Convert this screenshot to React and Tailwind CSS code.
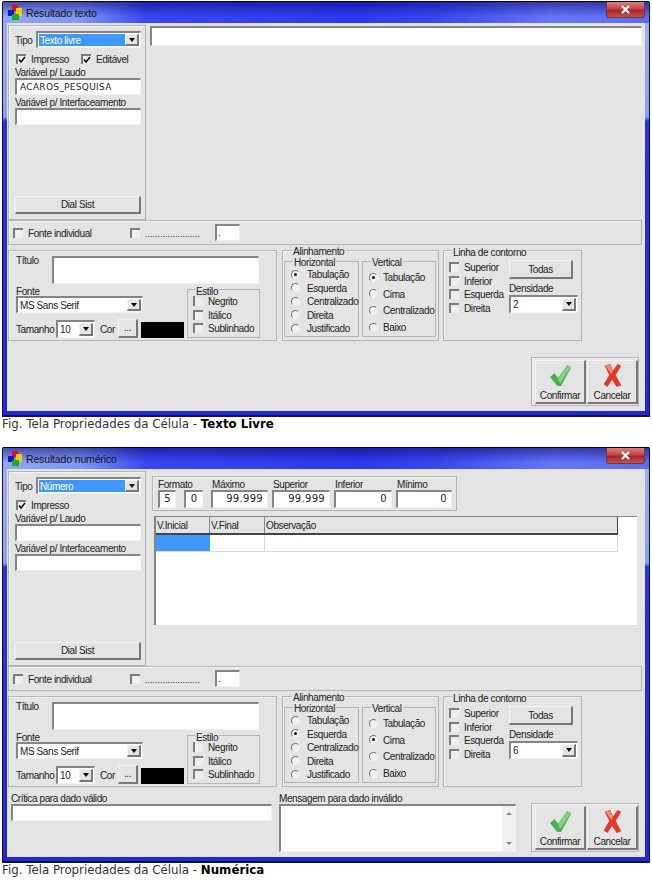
const ui = "font-['Liberation_Sans',Arial,sans-serif] text-[10px] leading-[12px] tracking-[-0.4px] whitespace-nowrap text-[#222]";
const sunken = "border-t-2 border-l-2 border-r border-b border-t-[#858585] border-l-[#858585] border-r-[#f1f1f1] border-b-[#f1f1f1] bg-white";
const raised = "border-r-2 border-b-2 border-t border-l border-t-[#f4f4f4] border-l-[#f4f4f4] border-r-[#777] border-b-[#777] bg-[#e4e4e4]";
const groupBox = "border border-[#b4b4b4] shadow-[inset_1px_1px_0_#f3f3f3]";
const mono = "font-['DejaVu_Sans',sans-serif] text-[10px] tracking-[0.3px] leading-[14px]";

function Check({ on, label, className = "", gap = "gap-[5px]" }) {
  return (
    <div className={`flex items-center ${gap} ${className}`}>
      <span className="w-[10px] h-[10px] border-t-2 border-l-2 border-[#7d7d7d] bg-[#efefef] flex items-center justify-center shrink-0">
        {on && (
          <svg width="8" height="8" viewBox="0 0 8 8">
            <path d="M1 3.5 L3 6 L7 1" fill="none" stroke="#111" strokeWidth="1.6" />
          </svg>
        )}
      </span>
      {label && <span className="translate-y-px">{label}</span>}
    </div>
  );
}

function Radio({ on, label, gap = "gap-[7px]", className = "" }) {
  return (
    <div className={`flex items-center ${gap} ${className}`}>
      <span className="w-[9px] h-[9px] rounded-full border border-[#efefef] border-t-[#777] border-l-[#777] bg-[#f1f1f1] flex items-center justify-center shrink-0">
        {on && <span className="w-[3px] h-[3px] rounded-full bg-[#111]" />}
      </span>
      <span className="translate-y-px">{label}</span>
    </div>
  );
}

function Arrow() {
  return (
    <span className={`w-[14px] self-stretch flex items-center justify-center shrink-0 ${raised}`}>
      <span className="border-x-[3px] border-x-transparent border-t-[4px] border-t-[#111]" />
    </span>
  );
}

function Combo({ value, className = "", text = "" }) {
  return (
    <div className={`flex p-px ${sunken} ${className}`}>
      <span className={`flex-1 pl-[1px] leading-[13px] ${text}`}>{value}</span>
      <Arrow />
    </div>
  );
}

function AppIcon() {
  return (
    <svg width="14" height="15" viewBox="0 0 14 15" className="shrink-0">
      <rect x="4" y="0" width="6" height="6" fill="#e01010" />
      <rect x="0" y="5" width="6" height="6" fill="#1414c8" />
      <rect x="8" y="3" width="6" height="8" fill="#f4d000" />
      <rect x="4" y="9" width="7" height="6" fill="#18b018" />
    </svg>
  );
}

function TitleBar({ title }) {
  return (
    <div className="h-[22px] flex items-center justify-between bg-[linear-gradient(180deg,rgba(8,8,110,0.55)_0%,rgba(8,8,110,0)_70%),linear-gradient(90deg,#8fa8f4_0%,#7f96f6_12%,#3a46f4_22%,#2c38f0_55%,#3a48f2_68%,#6676f6_85%,#5a6cf0_100%)] border-t border-t-black pl-[5px] pr-[4px]">
      <div className="flex items-center gap-[4px]">
        <AppIcon />
        <span className="text-[#111] text-[10.5px] tracking-[-0.15px]">{title}</span>
      </div>
      <div className="self-start w-[39px] h-[16px] rounded-b-[3px] bg-[linear-gradient(180deg,#d98080_0%,#c04848_45%,#a82424_55%,#c85050_100%)] border border-t-0 border-[#6b3a3a] flex items-center justify-center">
        <svg width="9" height="9" viewBox="0 0 9 9">
          <path d="M1 1 L8 8 M8 1 L1 8" stroke="#fff" strokeWidth="2.2" />
        </svg>
      </div>
    </div>
  );
}

function LeftPanel({ editable, value, tipo }) {
  return (
    <div className={`w-[138px] h-[195px] shrink-0 ${groupBox} pl-[6px] pr-[4px] pt-[5px] flex flex-col`}>
      <div className="flex items-center h-[17px]">
        <span className="w-[21px] shrink-0 translate-y-px">Tipo</span>
        <Combo value={tipo} className="flex-1 h-[17px]" text="bg-[#3f97fb] text-white" />
      </div>
      <div className="flex mt-[5px] ml-px h-[12px]">
        <Check on label="Impresso" className="w-[65px]" />
        {editable && <Check on label="Editável" />}
      </div>
      <span className="mt-[1px] h-[12px] translate-y-px">Variável p/ Laudo</span>
      <div className={`h-[17px] ${sunken} pl-[3px] ${mono} !text-[9px]`}>{value}</div>
      <span className="mt-[1px] h-[12px] translate-y-px">Variável p/ Interfaceamento</span>
      <div className={`h-[17px] ${sunken}`} />
      <button className={`mt-auto mb-[5px] h-[18px] pt-px ${raised}`}>Dial Sist</button>
    </div>
  );
}

function FontRow() {
  return (
    <div className={`h-[25px] mr-[3px] ${groupBox} flex items-center pl-[4px]`}>
      <Check label="Fonte individual" className="w-[117px]" />
      <Check label="......................" className="w-[85px] text-[9px] tracking-normal" />
      <div className={`w-[25px] h-[17px] ${sunken} pl-[1px] leading-[14px]`}>.</div>
    </div>
  );
}

function TitlePanel() {
  return (
    <div className={`w-[269px] h-[91px] ${groupBox} pl-[7px] pt-[3px] shrink-0`}>
      <div className="flex">
        <span className="w-[36px] translate-y-px">Título</span>
        <div className={`w-[207px] h-[28px] mt-[2px] ${sunken}`} />
      </div>
      <div className="flex">
        <div className="w-[171px] shrink-0 flex flex-col">
          <span className="h-[11px] mt-px translate-y-px">Fonte</span>
          <Combo value="MS Sans Serif" className="w-[127px] h-[17px]" />
          <div className="flex items-center mt-[6px] h-[19px]">
            <span className="w-[40px] shrink-0 translate-y-px">Tamanho</span>
            <Combo value="10" className="w-[39px] h-[18px]" />
            <span className="ml-[5px] w-[18px] shrink-0 translate-y-px">Cor</span>
            <button className={`w-[20px] h-[19px] ${raised} leading-[10px]`}>...</button>
            <div className="ml-[3px] w-[43px] h-[16px] mt-[2px] bg-black shrink-0" />
          </div>
        </div>
        <div className="mt-[5px] relative w-[73px] h-[49px] border border-[#b4b4b4] pl-[5px] pt-[5px]">
          <span className="absolute -top-[4px] left-[7px] bg-[#e4e4e4] px-px">Estilo</span>
          <div className="flex flex-col gap-[1.5px]">
            <Check label="Negrito" className="h-[12px]" />
            <Check label="Itálico" className="h-[12px]" />
            <Check label="Sublinhado" className="h-[12px]" />
          </div>
        </div>
      </div>
    </div>
  );
}

function AlignPanel({ horizontal, vertical }) {
  const hs = ["Tabulação", "Esquerda", "Centralizado", "Direita", "Justificado"];
  const vs = ["Tabulação", "Cima", "Centralizado", "Baixo"];
  return (
    <div className={`relative w-[157px] h-[91px] ml-[5px] ${groupBox} shrink-0 flex gap-[3px] pl-px pt-[10px]`}>
      <span className="absolute -top-[5px] left-[9px] bg-[#e4e4e4] px-px">Alinhamento</span>
      <div className="relative w-[75px] h-[76px] border border-[#b4b4b4] pl-[6px] pt-[6px] flex flex-col gap-[1.5px]">
        <span className="absolute -top-[5px] left-[8px] bg-[#e4e4e4] px-px">Horizontal</span>
        {hs.map((h) => <Radio key={h} label={h} on={h === horizontal} className="h-[12px]" />)}
      </div>
      <div className="relative w-[74px] h-[76px] border border-[#b4b4b4] pl-[6px] pt-[9px] flex flex-col gap-[4.7px]">
        <span className="absolute -top-[5px] left-[8px] bg-[#e4e4e4] px-px">Vertical</span>
        {vs.map((v) => <Radio key={v} label={v} on={v === vertical} gap="gap-[5px]" className="h-[12px]" />)}
      </div>
    </div>
  );
}

function LinePanel({ density }) {
  return (
    <div className={`relative w-[139px] h-[91px] ml-[4px] ${groupBox} shrink-0 flex pl-[5px] pt-[9px]`}>
      <span className="absolute -top-[4px] left-[8px] bg-[#e4e4e4] px-px">Linha de contorno</span>
      <div className="flex flex-col gap-[1.5px] w-[60px] pt-px">
        {["Superior", "Inferior", "Esquerda", "Direita"].map((l) => <Check key={l} label={l} className="h-[12px]" />)}
      </div>
      <div className="flex flex-col">
        <button className={`w-[64px] h-[19px] pt-[2px] ${raised}`}>Todas</button>
        <span className="mt-[3px] h-[12px] translate-y-px">Densidade</span>
        <Combo value={density} className="w-[69px] h-[18px] mt-px" />
      </div>
    </div>
  );
}

function ActionButtons() {
  return (
    <div className={`w-[108px] h-[49px] ${groupBox} flex gap-[1px] pl-[3px] pt-[2px]`}>
      <button className={`w-[51px] h-[44px] ${raised} flex flex-col items-center`}>
        <svg width="25" height="24" viewBox="0 0 25 24" className="mt-[4px]">
          <path d="M1 13 L6 9 L10 14 L20 0 L24 3 L13 23 L9 23 Z" fill="#4fae52" />
          <path d="M10 15 L20 1 L23 3 L12 20 Z" fill="#86d486" />
        </svg>
        <span className="mt-[3px]">Confirmar</span>
      </button>
      <button className={`w-[51px] h-[44px] ${raised} flex flex-col items-center`}>
        <svg width="21" height="25" viewBox="0 0 21 25" className="mt-[3px]">
          <path d="M2 2 L8 0 L11 7 L16 0 L20 2 L14 12 L20 23 L15 25 L10 17 L5 25 L1 22 L7 12 Z" fill="#e23a2a" />
          <path d="M3 2 L8 1 L11 8 L9 11 Z" fill="#f58a78" />
        </svg>
        <span className="mt-[3px]">Cancelar</span>
      </button>
    </div>
  );
}

function Field({ label, value, className = "" }) {
  return (
    <div className={`flex flex-col ${className}`}>
      <span className="h-[12px] ml-px translate-y-px">{label}</span>
      <div className={`h-[18px] ${sunken} ${mono} text-right pr-[4px]`}>{value}</div>
    </div>
  );
}

function NumericRight() {
  return (
    <div className="flex-1 h-[195px] min-w-0 flex flex-col pl-[2px]">
      <div className={`w-[305px] h-[35px] mt-[5px] ${groupBox} flex items-end gap-[4px] pl-[5px] pb-[2px] shrink-0`}>
        <div className="flex flex-col w-[45px]">
          <span className="h-[12px] translate-y-px">Formato</span>
          <div className="flex gap-[8px]">
            <div className={`w-[18px] h-[18px] ${sunken} ${mono} text-center`}>5</div>
            <div className={`w-[19px] h-[18px] ${sunken} ${mono} text-center`}>0</div>
          </div>
        </div>
        <Field label="Máximo" value="99.999" className="w-[57px] ml-[4px]" />
        <Field label="Superior" value="99.999" className="w-[58px]" />
        <Field label="Inferior" value="0" className="w-[58px]" />
        <Field label="Mínimo" value="0" className="w-[56px]" />
      </div>
      <div className="mt-[5px] ml-[2px] h-[109px] w-[483px] bg-white border-t border-l-2 border-[#858585] flex flex-col shrink-0">
        <div className="flex h-[18px] w-[462px] bg-[#e4e4e4] border-b-2 border-r border-[#444] shrink-0">
          <span className="w-[54px] border-r border-[#888] pl-[1px] leading-[18px]">V.Inicial</span>
          <span className="w-[55px] border-r border-[#888] pl-[1px] leading-[18px]">V.Final</span>
          <span className="flex-1 pl-[1px] leading-[18px]">Observação</span>
        </div>
        <div className="flex h-[17px] w-[462px] border-b border-r border-[#d8d8d8] shrink-0">
          <span className="w-[54px] bg-[#3f97fb]" />
          <span className="w-[55px] border-r border-[#d8d8d8]" />
        </div>
      </div>
    </div>
  );
}

function Window({ title, numeric, children, horizontal, vertical, density, bottom }) {
  return (
    <div className="mx-[2px] h-[416px] border-b-2 border-x border-[#101050] bg-[linear-gradient(180deg,#9fb0f4_0%,#8d9df2_28%,#2c30dc_29%,#2428d4_100%)] rounded-t-[2px] flex flex-col">
      <TitleBar title={title} />
      <div className="mx-[4px] mb-[4px] flex-1 bg-[#e4e4e4] pt-[2px] pl-[1px] flex flex-col">
        <div className="flex gap-[4px]">
          <LeftPanel tipo={numeric ? "Número" : "Texto livre"} editable={!numeric} value={numeric ? "" : "ACAROS_PESQUISA"} />
          {children}
        </div>
        <FontRow />
        <div className="flex mt-[5px]">
          <TitlePanel />
          <AlignPanel horizontal={horizontal} vertical={vertical} />
          <LinePanel density={density} />
        </div>
        {bottom}
      </div>
    </div>
  );
}

function Caption({ text, bold }) {
  return (
    <p className="ml-[2px] h-[14px] font-['DejaVu_Sans',sans-serif] text-[11.8px] leading-[14px] tracking-normal text-[#333]">
      {text} <b className="text-black">{bold}</b>
    </p>
  );
}

export default function App() {
  return (
    <div className={`w-[652px] h-[880px] bg-white pt-px ${ui}`}>
      <Window
        title="Resultado texto"
        horizontal="Tabulação"
        vertical="Tabulação"
        density="2"
        bottom={
          <div className="flex justify-end mr-[6px] mt-[16px]">
            <ActionButtons />
          </div>
        }
      >
        <div className="flex-1 pt-px pr-[3px]">
          <div className={`h-[20px] ${sunken}`} />
        </div>
      </Window>
      <Caption text="Fig. Tela Propriedades da Célula -" bold="Texto Livre" />
      <div className="h-[16px]" />
      <Window
        title="Resultado numérico"
        numeric
        horizontal="Esquerda"
        vertical="Cima"
        density="6"
        bottom={
          <div className="flex mt-[5px]">
            <div className="w-[261px] ml-[3px] flex flex-col shrink-0">
              <span className="h-[12px] translate-y-px">Crítica para dado válido</span>
              <div className={`h-[17px] ${sunken}`} />
            </div>
            <div className="w-[237px] ml-[7px] flex flex-col shrink-0">
              <span className="h-[12px] translate-y-px">Mensagem para dado inválido</span>
              <div className={`h-[48px] ${sunken} flex justify-end`}>
                <div className="w-[13px] flex flex-col justify-between items-center py-[6px] bg-[#f1f1f1]">
                  <span className="border-x-[3px] border-x-transparent border-b-[3px] border-b-[#888]" />
                  <span className="border-x-[3px] border-x-transparent border-t-[3px] border-t-[#888]" />
                </div>
              </div>
            </div>
            <div className="ml-[15px] mt-[11px]">
              <ActionButtons />
            </div>
          </div>
        }
      >
        <NumericRight />
      </Window>
      <Caption text="Fig. Tela Propriedades da Célula -" bold="Numérica" />
    </div>
  );
}
